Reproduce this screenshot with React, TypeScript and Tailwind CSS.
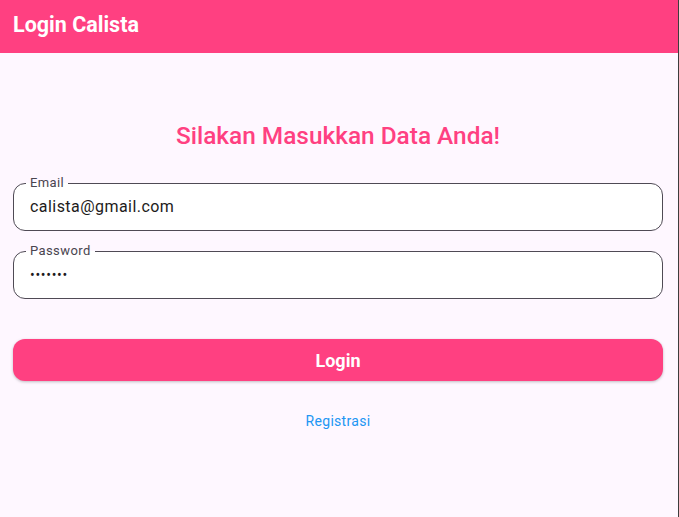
import React from 'react';

const Field = ({ label, value, password }: { label: string; value: string; password?: boolean }) => (
  <div className="relative h-12 rounded-xl border border-[#4f4a55] bg-white px-4 flex items-center">
    <span className="absolute -top-[9px] left-3 px-1 text-[13px] leading-4 tracking-[0.4px] text-[#49454f] bg-linear-to-b from-[#fef7ff] from-50% to-white to-50%">
      {label}
    </span>
    <span
      className={
        password
          ? 'text-[14px] text-[#1d1b20] tracking-[0.7px] leading-6 -mt-px'
          : 'text-[16px] text-[#1d1b20] tracking-[0.45px] leading-6'
      }
    >
      {value}
    </span>
  </div>
);

const App = () => {
  return (
    <div className="w-[679px] h-[517px] flex bg-[#fef7ff] font-['Roboto',sans-serif] overflow-hidden">
      <div className="flex-1 flex flex-col">
        {/* App bar */}
        <header className="h-[53px] bg-[#ff4081] flex items-center px-[13px] pb-[4px]">
          <h1 className="text-[21.5px] font-bold text-white leading-none">Login Calista</h1>
        </header>

        {/* Form */}
        <main className="flex flex-col pl-[13px] pr-[15px]">
          <h2 className="mt-[67px] text-center text-[24.4px] leading-8 font-medium text-[#ff4081]">
            Silakan Masukkan Data Anda!
          </h2>

          <div className="mt-[31px] flex flex-col gap-[20px]">
            <Field label="Email" value="calista@gmail.com" />
            <Field label="Password" value="•••••••" password />
          </div>

          <button className="mt-[40px] h-[42px] rounded-xl bg-[#ff4081] text-white text-[18px] font-bold shadow-[0_1px_3px_rgba(0,0,0,0.25)]">
            Login
          </button>

          <a className="mt-[30px] self-center text-[14px] leading-5 tracking-[0.3px] text-[#2196f3]">Registrasi</a>
        </main>
      </div>
      <div className="w-px bg-[#3d3d3d]" />
    </div>
  );
};

export default App;
